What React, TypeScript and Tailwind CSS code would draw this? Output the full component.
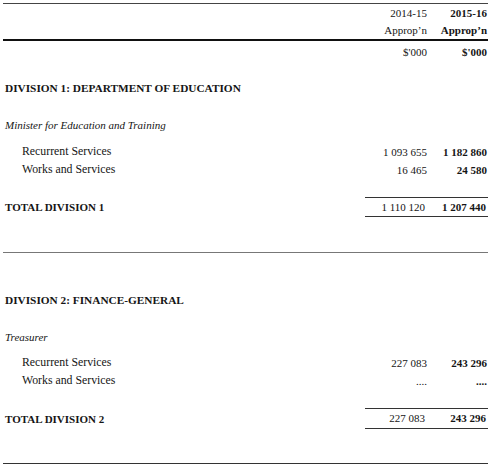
import React from "react";

const FONT = "[font-family:'Liberation_Serif','Times_New_Roman',serif]";

function Row({
  label,
  prev,
  curr,
  className = "",
  labelClass = "",
}: {
  label?: React.ReactNode;
  prev?: React.ReactNode;
  curr?: React.ReactNode;
  className?: string;
  labelClass?: string;
}) {
  return (
    <div className={`flex items-center ${className}`}>
      <div className={`flex-1 pl-[2px] ${labelClass}`}>{label}</div>
      <div className="w-[60px] text-right">{prev}</div>
      <div className="w-[61px] pr-[1px] text-right font-bold">{curr}</div>
    </div>
  );
}

function TotalRow({ label, prev, curr, className = "" }: { label: string; prev: string; curr: string; className?: string }) {
  return (
    <div className={`flex items-center ${className}`}>
      <div className="flex-1 pl-[2px] pt-[1px] font-bold">{label}</div>
      <div className="flex w-[123px] h-full items-center border-y border-[#333]">
        <div className="w-[60px] text-right">{prev}</div>
        <div className="w-[61px] text-right font-bold">{curr}</div>
      </div>
    </div>
  );
}

export default function App() {
  return (
    <div className={`w-[491px] h-[467px] bg-white px-[3px] text-[11px] text-[#151515] ${FONT}`}>
      <div className="mt-[3px] border-t border-[#444]" />
      {/* Column headings */}
      <Row className="h-[18px]" prev="2014-15" curr="2015-16" />
      <Row className="h-[17px]" prev="Approp’n" curr="Approp’n" />
      <div className="border-t-2 border-[#111]" />
      <Row className="h-[22px]" prev="$'000" curr="$'000" />

      {/* Division 1 */}
      <Row className="h-[18px] mt-[16px]" label="DIVISION 1: DEPARTMENT OF EDUCATION" labelClass="font-bold text-[11.3px]" />
      <Row className="h-[18px] mt-[19px]" label="Minister for Education and Training" labelClass="italic" />
      <Row className="h-[18px] mt-[9px]" label="Recurrent Services" labelClass="pl-[19px] text-[11.8px]" prev="1 093 655" curr="1 182 860" />
      <Row className="h-[18px]" label="Works and Services" labelClass="pl-[19px] text-[11.8px]" prev="16 465" curr="24 580" />
      <TotalRow className="mt-[18px] h-[20px]" label="TOTAL DIVISION 1" prev="1 110 120" curr="1 207 440" />

      <div className="mt-[35px] border-t border-[#777]" />

      {/* Division 2 */}
      <Row className="h-[18px] mt-[38px]" label="DIVISION 2: FINANCE-GENERAL" labelClass="font-bold text-[11.3px]" />
      <Row className="h-[18px] mt-[19px]" label="Treasurer" labelClass="italic" />
      <Row className="h-[18px] mt-[8px]" label="Recurrent Services" labelClass="pl-[19px] text-[11.8px]" prev="227 083" curr="243 296" />
      <Row className="h-[18px]" label="Works and Services" labelClass="pl-[19px] text-[11.8px]" prev="...." curr="...." />
      <TotalRow className="mt-[18px] h-[21px]" label="TOTAL DIVISION 2" prev="227 083" curr="243 296" />

      <div className="mt-[34px] border-t border-[#333]" />
    </div>
  );
}
